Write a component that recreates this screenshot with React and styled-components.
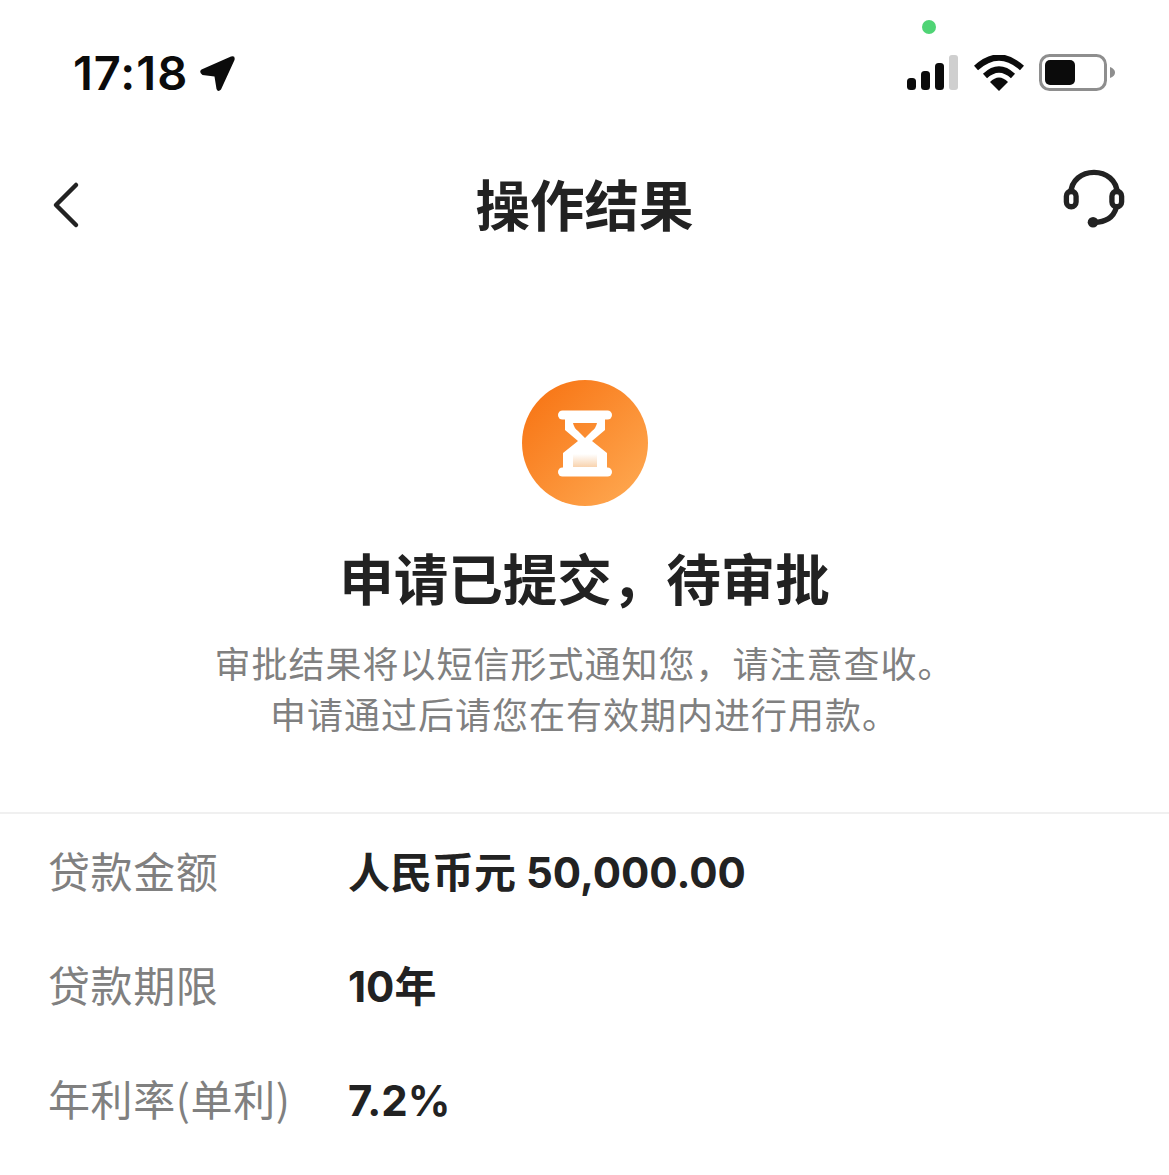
import React from "react";
import styled, { createGlobalStyle } from "styled-components";

const Global = createGlobalStyle`
  html, body { margin: 0; padding: 0; background: #fff; }
  body { font-family: "Noto Sans CJK SC", "Liberation Sans", sans-serif; }
`;

const Page = styled.div`
  width: 1169px;
  height: 1175px;
  overflow: hidden;
  background: #fff;
  display: flex;
  flex-direction: column;
`;

const StatusBar = styled.div`
  height: 146px;
  box-sizing: border-box;
  padding: 0 54px 0 73px;
  display: flex;
  justify-content: space-between;
  align-items: flex-start;
`;

const TimeGroup = styled.div`
  display: flex;
  align-items: center;
  gap: 11px;
  margin-top: 47px;
  height: 52px;
`;

const Time = styled.span`
  font-family: Inter, "Liberation Sans", sans-serif;
  font-size: 47px;
  font-weight: 600;
  line-height: 52px;
  letter-spacing: 1px;
  color: #0b0b0b;
`;

const StatusRight = styled.div`
  display: flex;
  flex-direction: column;
  align-items: flex-start;
  margin-top: 20px;
`;

const GreenDot = styled.span`
  width: 14px;
  height: 14px;
  border-radius: 50%;
  background: #4fd475;
  margin-left: 15px;
`;

const StatusIcons = styled.div`
  display: flex;
  align-items: center;
  gap: 15px;
  margin-top: 20px;
`;

const NavBar = styled.header`
  height: 118px;
  box-sizing: border-box;
  padding: 0 42px 5px;
  display: grid;
  grid-template-columns: 1fr auto 1fr;
  align-items: center;
`;

const NavBack = styled.div`
  display: flex;
  justify-content: flex-start;
  padding: 4px 0 0 8px;
`;

const NavAction = styled.div`
  display: flex;
  justify-content: flex-end;
  padding: 0 2px 6px 0;
`;

const NavTitle = styled.h1`
  margin: 0;
  font-size: 54.5px;
  font-weight: 700;
  line-height: 64px;
  color: #222;
`;

const Result = styled.section`
  display: flex;
  flex-direction: column;
  align-items: center;
  padding-top: 116px;
  height: 550px;
  box-sizing: border-box;
  border-bottom: 2px solid #f0f0f0;
`;

const Badge = styled.div`
  width: 126px;
  height: 126px;
  border-radius: 50%;
  background: linear-gradient(135deg, #f7700f 0%, #ffac55 100%);
  display: flex;
  align-items: center;
  justify-content: center;
`;

const ResultTitle = styled.h2`
  margin: 36px 0 0;
  font-size: 54.5px;
  font-weight: 700;
  line-height: 70px;
  color: #222;
`;

const ResultNote = styled.p`
  margin: 25px 0 0;
  font-size: 36px;
  font-weight: 400;
  line-height: 51px;
  letter-spacing: 1px;
  color: #808080;
  text-align: center;
`;

const Details = styled.dl`
  margin: 0;
  padding: 0 48px;
  display: flex;
  flex-direction: column;
`;

const DetailRow = styled.div`
  height: 114px;
  display: flex;
  align-items: center;
`;

const DetailLabel = styled.dt`
  width: 300px;
  margin-bottom: 2px;
  font-size: 42px;
  font-weight: 400;
  letter-spacing: 0.6px;
  color: #808080;
  line-height: 56px;
`;

const DetailValue = styled.dd`
  margin: 4px 0 0;
  font-size: 42px;
  font-weight: 700;
  color: #222;
  line-height: 56px;
  font-family: Inter, "Noto Sans CJK SC", sans-serif;
`;

const rows = [
  ["贷款金额", "人民币元 50,000.00"],
  ["贷款期限", "10年"],
  ["年利率(单利)", "7.2%"],
];

export default function App() {
  return (
    <Page>
      <Global />
      <StatusBar>
        <TimeGroup>
          <Time>17:18</Time>
          <svg width="37" height="37" viewBox="0 0 37 37">
            <path d="M2.5 14.5 L32 1.5 Q36.5 0 35.5 5 L22 34.5 Q19 37.5 17.5 34 L15.5 21.5 L3.5 20 Q-0.5 17 2.5 14.5 Z" fill="#0b0b0b" />
          </svg>
        </TimeGroup>
        <StatusRight>
          <GreenDot />
          <StatusIcons>
            <svg width="52" height="36" viewBox="0 0 52 36">
              <rect x="0" y="23" width="9" height="12" rx="3.5" fill="#0b0b0b" />
              <rect x="14" y="16" width="9" height="19" rx="3.5" fill="#0b0b0b" />
              <rect x="28" y="8" width="9" height="27" rx="3.5" fill="#0b0b0b" />
              <rect x="42" y="0" width="9" height="35" rx="3" fill="#cfcfcf" />
            </svg>
            <svg width="50" height="36" viewBox="0 0 50 36">
              <path d="M2 13 Q25 -8 48 13" fill="none" stroke="#0b0b0b" strokeWidth="6" />
              <path d="M11 21 Q25 8 39 21" fill="none" stroke="#0b0b0b" strokeWidth="6" />
              <path d="M16 27 Q25 18 34 27 L25 36 Z" fill="#0b0b0b" />
            </svg>
            <svg width="76" height="38" viewBox="0 0 76 38">
              <rect x="1.5" y="1.5" width="65" height="34" rx="9" fill="none" stroke="#8e8e8e" strokeWidth="3" />
              <rect x="6" y="6" width="30" height="25" rx="5" fill="#0b0b0b" />
              <path d="M71 13 Q76 15 76 18.5 Q76 22 71 24 Z" fill="#8e8e8e" />
            </svg>
          </StatusIcons>
        </StatusRight>
      </StatusBar>
      <NavBar>
        <NavBack>
          <svg width="32" height="48" viewBox="0 0 32 48">
            <path d="M26 4 L6 24 L26 44" fill="none" stroke="#222" strokeWidth="4.5" strokeLinecap="round" strokeLinejoin="round" />
          </svg>
        </NavBack>
        <NavTitle>操作结果</NavTitle>
        <NavAction>
          <svg width="62" height="64" viewBox="0 0 64 64">
            <path d="M8 26 C8 -4 56 -4 56 26" fill="none" stroke="#222" strokeWidth="5.5" />
            <rect x="3.5" y="23" width="10" height="16" rx="5" fill="none" stroke="#222" strokeWidth="5.5" />
            <rect x="50.5" y="23" width="10" height="16" rx="5" fill="none" stroke="#222" strokeWidth="5.5" />
            <path d="M55 40 C52 50 44 55 32 55" fill="none" stroke="#222" strokeWidth="5.5" />
            <circle cx="31" cy="55" r="5.5" fill="#222" />
          </svg>
        </NavAction>
      </NavBar>
      <Result>
        <Badge>
          <svg width="58" height="69" viewBox="556 409 58 69">
            <defs>
              <linearGradient id="sand" x1="0" y1="0" x2="0" y2="1">
                <stop offset="0" stopColor="#fff" />
                <stop offset="1" stopColor="#f8d3ae" />
              </linearGradient>
            </defs>
            <rect x="558" y="410.5" width="54" height="9" rx="4.5" fill="#fff" />
            <rect x="558" y="467.5" width="54" height="9" rx="4.5" fill="#fff" />
            <path
              fillRule="evenodd"
              fill="#fff"
              d="M565 415 H605 V430 L592 441 L607 453 V472 H563 V453 L578 441 L565 430 Z M573 423 H597 Q596 428 592 431 L585 438 L578 431 Q574 428 573 423 Z"
            />
            <rect x="573" y="454" width="24" height="13" fill="url(#sand)" />
          </svg>
        </Badge>
        <ResultTitle>申请已提交，待审批</ResultTitle>
        <ResultNote>
          审批结果将以短信形式通知您，请注意查收。
          <br />
          申请通过后请您在有效期内进行用款。
        </ResultNote>
      </Result>
      <Details>
        {rows.map(([label, value]) => (
          <DetailRow key={label}>
            <DetailLabel>{label}</DetailLabel>
            <DetailValue>{value}</DetailValue>
          </DetailRow>
        ))}
      </Details>
    </Page>
  );
}
